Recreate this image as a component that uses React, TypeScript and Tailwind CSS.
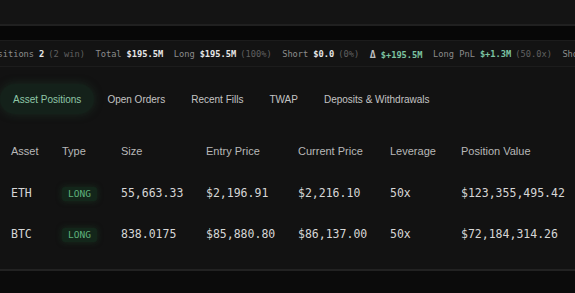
import React from "react";

const mono = { fontFamily: '"DejaVu Sans Mono", "Liberation Mono", monospace' };

function Stat({ label, value, extra, green }: { label: string; value: string; extra?: string; green?: boolean }) {
  return (
    <span className="flex items-baseline whitespace-nowrap">
      <span className="text-[#8c8c8c]">{label}</span>
      <span className={`ml-[5px] font-bold ${green ? "text-[#7cc3a2]" : "text-[#e6e6e6]"}`}>{value}</span>
      {extra && <span className="ml-[4px] text-[#606060]">{extra}</span>}
    </span>
  );
}

const tabs = ["Asset Positions", "Open Orders", "Recent Fills", "TWAP", "Deposits & Withdrawals"];
const headers = ["Asset", "Type", "Size", "Entry Price", "Current Price", "Leverage", "Position Value"];
const rows = [
  ["ETH", "LONG", "55,663.33", "$2,196.91", "$2,216.10", "50x", "$123,355,495.42"],
  ["BTC", "LONG", "838.0175", "$85,880.80", "$86,137.00", "50x", "$72,184,314.26"],
];

export default function App() {
  return (
    <div className="w-[575px] h-[293px] overflow-hidden bg-[#0b0b0b] flex flex-col" style={{ fontFamily: '"Liberation Sans", Arial, sans-serif' }}>
      <div className="h-[24px] bg-[#141414] shrink-0" />
      <div className="h-[2px] bg-[#202020] shrink-0" />
      <div className="h-[14px] bg-[#070707] shrink-0" />
      <div className="h-[1px] bg-[#1c1c1c] shrink-0" />
      <div className="h-[25px] pt-[2px] bg-[#131313] shrink-0 overflow-hidden flex items-center">
        <div className="flex items-center gap-[10.5px] ml-[-13px] text-[8.7px]" style={mono}>
          <Stat label="Positions" value="2" extra="(2 win)" />
          <Stat label="Total" value="$195.5M" />
          <Stat label="Long" value="$195.5M" extra="(100%)" />
          <Stat label="Short" value="$0.0" extra="(0%)" />
          <span className="flex items-baseline whitespace-nowrap">
            <span className="text-[#bdbdbd] font-bold text-[10px]">Δ</span>
            <span className="ml-[5px] font-bold text-[#7cc3a2]">$+195.5M</span>
          </span>
          <Stat label="Long PnL" value="$+1.3M" extra="(50.0x)" green />
          <Stat label="Short" value="$0.0" />
        </div>
      </div>
      <div className="h-[1px] bg-[#1c1c1c] shrink-0" />
      <div className="h-[202px] bg-[#121212] shrink-0 flex flex-col">
        <div className="flex items-center pt-[17px]">
          {tabs.map((t, i) => (
            <div
              key={t}
              className={`h-[30px] px-[13px] flex items-center text-[10px] whitespace-nowrap ${
                i === 0
                  ? "rounded-full bg-[#14211a] text-[#8fc7a8] shadow-[0_0_10px_rgba(40,90,60,0.35)]"
                  : "text-[#c4c4c4]"
              }`}
            >
              {t}
            </div>
          ))}
        </div>
        <div className="mt-[16px] pl-[11px]">
          <div className="grid grid-cols-[51px_59px_85px_92px_92px_71px_1fr] h-[43px] items-center text-[11px] text-[#b8b8b8]">
            {headers.map((h) => (
              <div key={h} className="whitespace-nowrap">{h}</div>
            ))}
          </div>
          {rows.map((r) => (
            <div key={r[0]} className="grid grid-cols-[51px_59px_85px_92px_92px_71px_1fr] h-[41px] items-center text-[11.5px] text-[#d6d6d6]" style={mono}>
              {r.map((c, j) =>
                j === 1 ? (
                  <div key={j}>
                    <span className="inline-flex items-center h-[14px] px-[6px] rounded-[3px] bg-[#13261a] text-[#5fb27c] text-[9.5px] shadow-[0_0_6px_rgba(30,80,45,0.45)]">
                      {c}
                    </span>
                  </div>
                ) : (
                  <div key={j} className="whitespace-nowrap">{c}</div>
                )
              )}
            </div>
          ))}
        </div>
      </div>
      <div className="h-[2px] bg-[#222222] shrink-0" />
      <div className="flex-1 bg-[#0b0b0b]" />
    </div>
  );
}
